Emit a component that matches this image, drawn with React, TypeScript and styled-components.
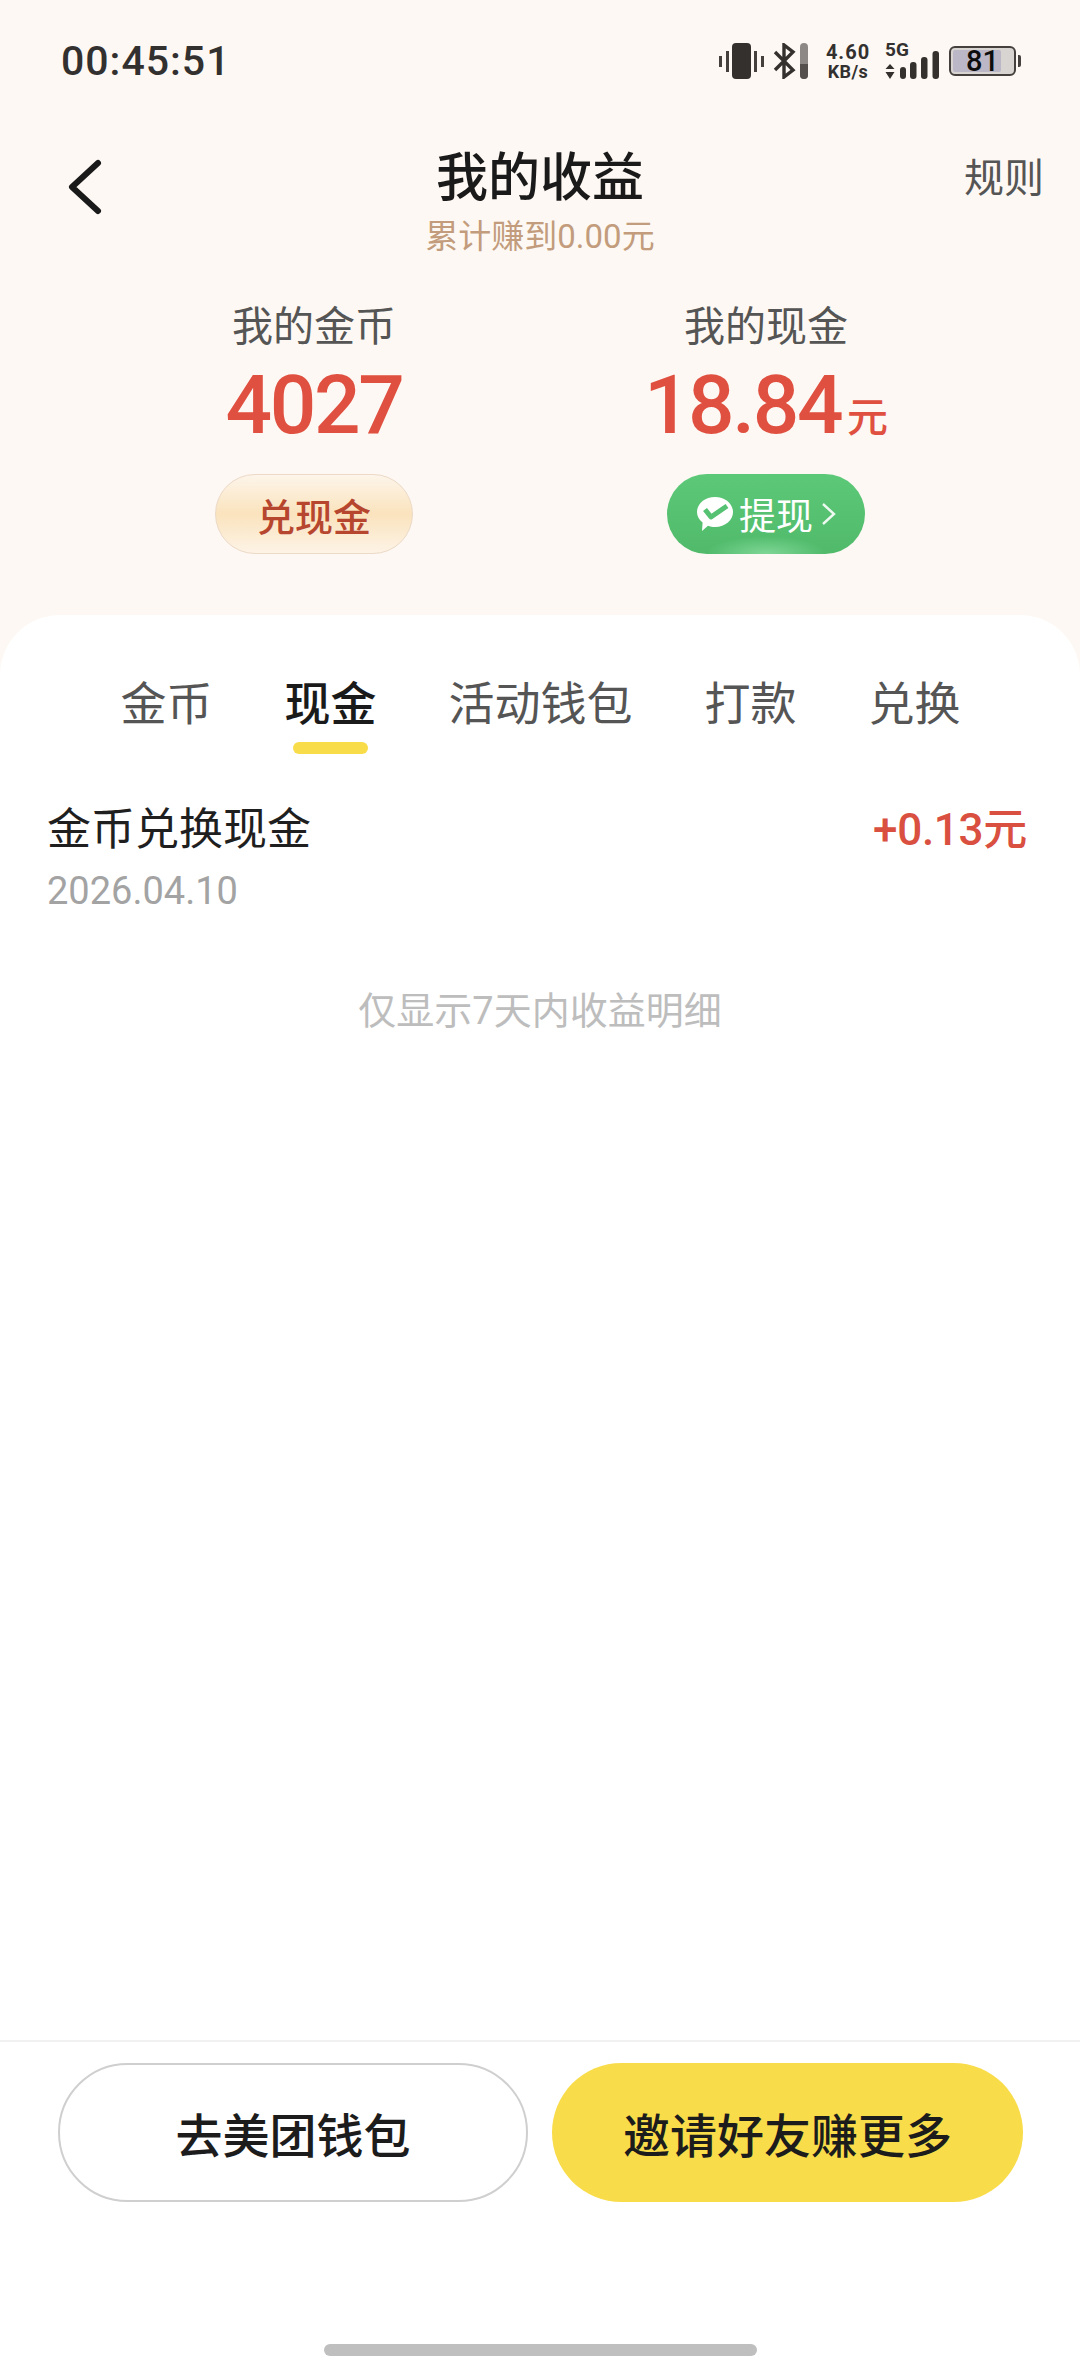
import React from 'react';
import styled, { createGlobalStyle } from 'styled-components';

const GlobalStyle = createGlobalStyle`
  html, body {
    margin: 0;
    padding: 0;
    background: #fff;
  }
  body {
    font-family: Roboto, "Noto Sans CJK SC", sans-serif;
  }
  * {
    box-sizing: border-box;
  }
`;

const Page = styled.div`
  width: 1080px;
  height: 2376px;
  display: flex;
  flex-direction: column;
  background: #fdf8f3;
  overflow: hidden;
`;

const StatusBar = styled.div`
  height: 120px;
  padding: 2px 59px 0 61px;
  display: flex;
  justify-content: space-between;
  align-items: center;
  color: #333030;
`;

const Time = styled.div`
  font-size: 41px;
  font-weight: 500;
  letter-spacing: 1px;
`;

const StatusIcons = styled.div`
  display: flex;
  align-items: center;
  height: 36px;
`;

const Speed = styled.div`
  width: 50px;
  margin: 0 12px 0 14px;
  display: flex;
  flex-direction: column;
  align-items: center;
  font-weight: 700;
  white-space: nowrap;
`;

const SpeedValue = styled.div`
  font-size: 20px;
  line-height: 20px;
  letter-spacing: 1px;
`;

const SpeedUnit = styled.div`
  font-size: 18px;
  line-height: 19px;
  letter-spacing: 0.4px;
`;

const SignalWrap = styled.div`
  width: 54px;
  margin-right: 10px;
  height: 36px;
  position: relative;
`;

const FiveG = styled.span`
  position: absolute;
  left: 0;
  top: -3px;
  font-size: 19px;
  font-weight: 700;
  line-height: 20px;
`;

const Battery = styled.div`
  width: 67px;
  height: 30px;
  padding: 2px;
  border: 2px solid #45403e;
  border-radius: 6px;
  position: relative;
  background: #d8d4d2;
`;

const BatteryFill = styled.div`
  height: 100%;
  width: 81%;
  border-radius: 2px;
  background: #bcb7c6;
`;

const BatteryValue = styled.span`
  position: absolute;
  left: 0;
  right: 0;
  top: -3px;
  text-align: center;
  font-size: 29px;
  line-height: 32px;
  font-weight: 500;
  color: #0d0d0d;
`;

const BatteryNub = styled.div`
  width: 3px;
  height: 12px;
  margin-left: 2px;
  background: #45403e;
  border-radius: 0 2px 2px 0;
`;

const Header = styled.div`
  position: relative;
  height: 145px;
  display: flex;
  flex-direction: column;
  align-items: center;
`;

const BackButton = styled.div`
  position: absolute;
  left: 66px;
  top: 37px;
  width: 40px;
  height: 60px;
`;

const Title = styled.div`
  height: 90px;
  padding-top: 27px;
  font-size: 52px;
  line-height: 64px;
  font-weight: 500;
  color: #1a1a1a;
`;

const Subtitle = styled.div`
  font-size: 33px;
  line-height: 44px;
  margin-top: 5px;
  color: #c29c7c;
`;

const RuleLink = styled.div`
  position: absolute;
  right: 36px;
  top: 33px;
  font-size: 40px;
  line-height: 52px;
  color: #555;
`;

const Stats = styled.div`
  display: grid;
  grid-template-columns: 1fr 1fr;
  padding: 0 88px;
`;

const StatColumn = styled.div`
  display: flex;
  flex-direction: column;
  align-items: center;
`;

const StatLabel = styled.div`
  height: 60px;
  margin-top: 32px;
  font-size: 41px;
  line-height: 60px;
  color: #555;
`;

const StatValue = styled.div`
  height: 78px;
  margin-top: 9px;
  font-size: 82px;
  line-height: 78px;
  font-weight: 500;
  letter-spacing: -2.4px;
  color: #e05040;
  white-space: nowrap;
`;

const StatUnit = styled.span`
  font-size: 41px;
  font-weight: 500;
  letter-spacing: 0;
  margin-left: 6px;
  position: relative;
  top: -1px;
`;

const PillButton = styled.div<{ $green?: boolean }>`
  width: 198px;
  height: 80px;
  margin-top: 30px;
  border-radius: 40px;
  display: flex;
  align-items: center;
  justify-content: center;
  font-size: 38px;
  font-weight: 500;
  color: ${(p) => (p.$green ? '#fff' : '#b7462f')};
  border: ${(p) => (p.$green ? 'none' : '1px solid #ecd9c6')};
  background: ${(p) =>
    p.$green
      ? 'radial-gradient(ellipse 60px 18px at 50% 100%, #7fd696 0%, rgba(127,214,150,0) 100%), linear-gradient(#5cc978, #50ba6a)'
      : 'linear-gradient(#fdf5ea 0%, #fae3bd 50%, #fdf3e6 100%)'};
`;

const WithdrawLabel = styled.span`
  margin: 0 8px 0 5px;
  font-size: 37px;
  font-weight: 400;
`;

const Sheet = styled.div`
  flex: 1;
  margin-top: 61px;
  background: #fff;
  border-radius: 60px 60px 0 0;
  display: flex;
  flex-direction: column;
`;

const Tabs = styled.div`
  display: flex;
  justify-content: center;
  gap: 72px;
  height: 147px;
  padding: 60px 0 0 1px;
`;

const Tab = styled.div<{ $active?: boolean }>`
  position: relative;
  font-size: 46px;
  line-height: 58px;
  height: 58px;
  font-weight: ${(p) => (p.$active ? 500 : 400)};
  color: ${(p) => (p.$active ? '#1a1a1a' : '#555')};
  ${(p) =>
    p.$active &&
    `&::after {
      content: '';
      position: absolute;
      left: 8px;
      top: 67px;
      width: 75px;
      height: 12px;
      border-radius: 6px;
      background: #f9dc4a;
    }`}
`;

const Record = styled.div`
  display: flex;
  justify-content: space-between;
  padding: 39px 53px 0 47px;
`;

const RecordTitle = styled.div`
  font-size: 44px;
  line-height: 58px;
  color: #1f1f1f;
`;

const RecordDate = styled.div`
  margin-top: 3px;
  font-size: 38px;
  line-height: 58px;
  color: #a3a3a3;
`;

const RecordAmount = styled.div`
  font-size: 44px;
  line-height: 58px;
  font-weight: 500;
  letter-spacing: -0.3px;
  color: #d94f40;
`;

const Note = styled.div`
  margin-top: 63px;
  text-align: center;
  font-size: 38px;
  line-height: 56px;
  color: #bdbdbd;
`;

const Footer = styled.div`
  margin-top: auto;
  height: 336px;
  border-top: 2px solid #f1f1f1;
  padding: 21px 57px 0 58px;
  display: flex;
  flex-direction: column;
`;

const FooterButtons = styled.div`
  display: grid;
  grid-template-columns: 470px 471px;
  gap: 24px;
`;

const ActionButton = styled.div<{ $primary?: boolean }>`
  height: 139px;
  border-radius: 70px;
  display: flex;
  align-items: center;
  justify-content: center;
  font-size: 47px;
  font-weight: 500;
  color: #1c1c1c;
  background: ${(p) => (p.$primary ? '#f9dc4a' : '#fff')};
  border: ${(p) => (p.$primary ? 'none' : '2px solid #cfcfcf')};
`;

const HomeBar = styled.div`
  width: 433px;
  height: 12px;
  margin: 142px auto 0;
  border-radius: 6px;
  background: #bfbfbf;
`;

const VibrateIcon = () => (
  <svg width="46" height="36" viewBox="0 0 46 36">
    <rect x="0" y="13" width="3" height="11" fill="#45403e" />
    <rect x="7" y="8" width="3" height="21" fill="#45403e" />
    <rect x="13" y="0" width="19" height="36" rx="4" fill="#33302e" />
    <rect x="35" y="8" width="3" height="21" fill="#45403e" />
    <rect x="42" y="13" width="3" height="11" fill="#45403e" />
  </svg>
);

const BluetoothIcon = () => (
  <svg width="36" height="36" viewBox="0 0 36 36" style={{ marginLeft: 8 }}>
    <path
      d="M2 9 L20 27 L11 34 L11 2 L20 9 L2 27"
      fill="none"
      stroke="#33302e"
      strokeWidth="3.4"
      strokeLinejoin="miter"
    />
    <rect x="27" y="0" width="8" height="36" rx="4" fill="#8d8886" />
    <path d="M27 21 H35 V32 a4 4 0 0 1 -8 0 Z" fill="#55504e" />
  </svg>
);

const SignalIcon = () => (
  <svg width="54" height="36" viewBox="0 0 54 36" style={{ position: 'absolute', left: 0, top: 0 }}>
    <path d="M5 21 L0.5 26 H9.5 Z M5 36 L0.5 29 H9.5 Z" fill="#33302e" />
    <rect x="15" y="24" width="6" height="12" rx="3" fill="#33302e" />
    <rect x="25" y="19" width="6.5" height="17" rx="3" fill="#33302e" />
    <rect x="36" y="14" width="6.5" height="22" rx="3" fill="#33302e" />
    <rect x="47.5" y="8" width="6.5" height="28" rx="3" fill="#33302e" />
  </svg>
);

const BackIcon = () => (
  <svg width="40" height="60" viewBox="0 0 40 60">
    <path
      d="M32 6 L6 30 L32 54"
      fill="none"
      stroke="#1a1a1a"
      strokeWidth="6"
      strokeLinecap="round"
      strokeLinejoin="round"
    />
  </svg>
);

const WechatIcon = () => (
  <svg width="38" height="36" viewBox="0 0 38 36">
    <path
      d="M19 1 C29.5 1 37 8 37 16 C37 24 29.5 31 19 31 C16.5 31 14 30.6 12 29.8 L6 35 L6.6 26.5 C3 23.6 1 20 1 16 C1 8 8.5 1 19 1 Z"
      fill="#fff"
    />
    <path
      d="M9 13.5 L15 21 L31 10"
      fill="none"
      stroke="#55c172"
      strokeWidth="5"
      strokeLinejoin="round"
    />
  </svg>
);

const ChevronIcon = () => (
  <svg width="15" height="24" viewBox="0 0 15 24">
    <path d="M2 2 L13 12 L2 22" fill="none" stroke="#fff" strokeWidth="2.4" opacity="0.9" />
  </svg>
);

const tabs = ['金币', '现金', '活动钱包', '打款', '兑换'];

const App = (): JSX.Element => {
  return (
    <Page>
      <GlobalStyle />
      <StatusBar>
        <Time>00:45:51</Time>
        <StatusIcons>
          <VibrateIcon />
          <BluetoothIcon />
          <Speed>
            <SpeedValue>4.60</SpeedValue>
            <SpeedUnit>KB/s</SpeedUnit>
          </Speed>
          <SignalWrap>
            <FiveG>5G</FiveG>
            <SignalIcon />
          </SignalWrap>
          <Battery>
            <BatteryFill />
            <BatteryValue>81</BatteryValue>
          </Battery>
          <BatteryNub />
        </StatusIcons>
      </StatusBar>

      <Header>
        <BackButton>
          <BackIcon />
        </BackButton>
        <Title>我的收益</Title>
        <Subtitle>累计赚到0.00元</Subtitle>
        <RuleLink>规则</RuleLink>
      </Header>

      <Stats>
        <StatColumn>
          <StatLabel>我的金币</StatLabel>
          <StatValue>4027</StatValue>
          <PillButton>兑现金</PillButton>
        </StatColumn>
        <StatColumn>
          <StatLabel>我的现金</StatLabel>
          <StatValue>
            18.84<StatUnit>元</StatUnit>
          </StatValue>
          <PillButton $green>
            <WechatIcon />
            <WithdrawLabel>提现</WithdrawLabel>
            <ChevronIcon />
          </PillButton>
        </StatColumn>
      </Stats>

      <Sheet>
        <Tabs>
          {tabs.map((t) => (
            <Tab key={t} $active={t === '现金'}>
              {t}
            </Tab>
          ))}
        </Tabs>
        <Record>
          <div>
            <RecordTitle>金币兑换现金</RecordTitle>
            <RecordDate>2026.04.10</RecordDate>
          </div>
          <RecordAmount>+0.13元</RecordAmount>
        </Record>
        <Note>仅显示7天内收益明细</Note>
        <Footer>
          <FooterButtons>
            <ActionButton>去美团钱包</ActionButton>
            <ActionButton $primary>邀请好友赚更多</ActionButton>
          </FooterButtons>
          <HomeBar />
        </Footer>
      </Sheet>
    </Page>
  );
};

export default App;
